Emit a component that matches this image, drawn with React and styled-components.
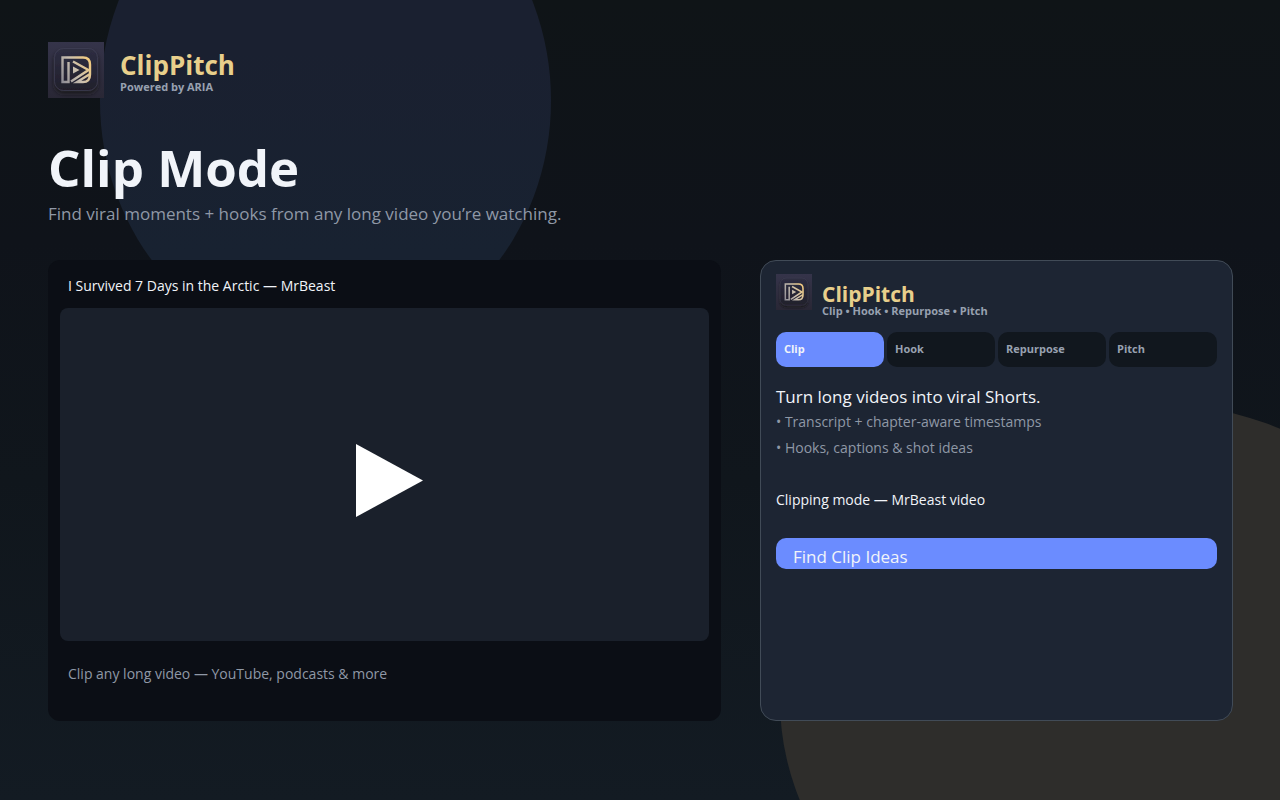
import React from 'react';
import styled, { createGlobalStyle } from 'styled-components';

const GlobalStyle = createGlobalStyle`
  * { box-sizing: border-box; }
  body {
    margin: 0;
    background: #10151b;
    color: #f1f4f9;
    font-family: 'Open Sans', 'Noto Sans', sans-serif;
  }
  h1, h2, p, ul { margin: 0; padding: 0; }
`;

const Page = styled.div`
  position: relative;
  display: flex;
  flex-direction: column;
  min-height: 100vh;
  padding: 42px 47px 79px 48px;
  overflow: hidden;
  background: linear-gradient(#0f1417 0%, #0f131a 30%, #10161c 60%, #131b23 100%);
`;

const Glow = styled.div`
  position: absolute;
  border-radius: 50%;
  background: ${(p) => p.$color};
  left: ${(p) => p.$left};
  top: ${(p) => p.$top};
  width: ${(p) => p.$width};
  height: ${(p) => p.$height};
`;

const Brand = styled.div`
  position: relative;
  display: flex;
  align-items: flex-start;
  gap: ${(p) => (p.$small ? '10px' : '16px')};
`;

const BrandText = styled.div`
  padding-top: 8px;
`;

const BrandName = styled.p`
  color: #e8cf8b;
  font-size: ${(p) => (p.$small ? '21px' : '26px')};
  line-height: ${(p) => (p.$small ? '24px' : '30px')};
  font-weight: 700;
`;

const Tagline = styled.p`
  color: #98a1b0;
  font-size: 11px;
  line-height: ${(p) => (p.$small ? '10px' : '14px')};
  font-weight: 700;
`;

const Intro = styled.header`
  position: relative;
  margin-top: 38px;
`;

const Title = styled.h1`
  font-size: 51px;
  line-height: 62px;
  font-weight: 700;
`;

const Subtitle = styled.p`
  margin-top: 4px;
  color: #8f98a6;
  font-size: 17px;
  line-height: 24px;
`;

const Columns = styled.main`
  position: relative;
  display: grid;
  grid-template-columns: 673fr 473fr;
  gap: 39px;
  flex: 1;
  margin-top: 34px;
`;

const VideoCard = styled.section`
  display: flex;
  flex-direction: column;
  padding: 12px;
  border-radius: 12px;
  background: #0b0e15;
`;

const Caption = styled.p`
  padding: 0 8px;
  color: ${(p) => (p.$muted ? '#8f98a6' : '#f1f4f9')};
  font-size: 14px;
  line-height: 28px;
`;

const Player = styled.button`
  display: flex;
  align-items: center;
  justify-content: center;
  flex: 1;
  margin: 8px 0 19px;
  padding: 12px 0 0 10px;
  border: 0;
  border-radius: 8px;
  background: #1a202b;
`;

const Footer = styled.div`
  padding-bottom: 21px;
`;

const Panel = styled.aside`
  padding: 13px 15px;
  border: 1px solid #414b57;
  border-radius: 16px;
  background: #1d2533;
`;

const Tabs = styled.nav`
  display: grid;
  grid-template-columns: repeat(4, 1fr);
  gap: 3px;
  margin-top: 16px;
`;

const Tab = styled.button`
  height: 35px;
  padding: 0 8px 2px;
  border: 0;
  border-radius: 10px;
  background: ${(p) => (p.$active ? '#6b8cff' : '#11171e')};
  color: ${(p) => (p.$active ? '#f1f4f9' : '#98a1b0')};
  font-family: inherit;
  font-size: 11px;
  font-weight: 700;
  text-align: left;
`;

const PanelTitle = styled.h2`
  margin-top: 18px;
  font-size: 17px;
  line-height: 24px;
  font-weight: 400;
`;

const Features = styled.ul`
  list-style: none;
  color: #8f98a6;
  font-size: 14px;
  line-height: 26px;
`;

const Status = styled.p`
  margin-top: 26px;
  font-size: 14px;
  line-height: 26px;
`;

const Action = styled.button`
  display: block;
  width: 100%;
  height: 31px;
  margin-top: 25px;
  padding: 7px 17px 0;
  border: 0;
  border-radius: 10px;
  background: #6b8cff;
  color: #f1f4f9;
  font-family: inherit;
  font-size: 17px;
  line-height: 24px;
  text-align: left;
`;

function Logo({ size, id }) {
  return (
    <svg width={size} height={size} viewBox="0 0 56 56" aria-hidden="true">
      <defs>
        <linearGradient id={`${id}-back`} x1="0" y1="0" x2="0" y2="1">
          <stop offset="0" stopColor="#35344a" />
          <stop offset="1" stopColor="#292735" />
        </linearGradient>
        <linearGradient id={`${id}-tile`} x1="0" y1="0" x2="0" y2="1">
          <stop offset="0" stopColor="#2e2e42" />
          <stop offset="1" stopColor="#211f2b" />
        </linearGradient>
        <linearGradient id={`${id}-metal`} gradientUnits="userSpaceOnUse" x1="13" y1="38" x2="43" y2="22">
          <stop offset="0" stopColor="#8d8b94" />
          <stop offset="0.5" stopColor="#c9bfb0" />
          <stop offset="1" stopColor="#f1ca80" />
        </linearGradient>
        <filter id={`${id}-shadow`} x="-20%" y="-20%" width="140%" height="150%">
          <feDropShadow dx="0" dy="3" stdDeviation="2" floodColor="#14121d" floodOpacity="0.8" />
        </filter>
      </defs>
      <rect width="56" height="56" fill={`url(#${id}-back)`} />
      <rect x="6.5" y="6.5" width="43" height="42" rx="9" fill={`url(#${id}-tile)`} stroke="#45445a" strokeWidth="0.6" filter={`url(#${id}-shadow)`} />
      <g fill="none" stroke={`url(#${id}-metal)`} strokeWidth="2.4" strokeLinejoin="miter">
        <path d="M20.5 20V40H14.500V15.500H35Q42 15.500 42 22.500V32.500Q42 40 35 40H29L42 32" />
        <path d="M25 19.500L40.500 28L23 39.500" />
      </g>
      <path d="M25 24.500L31.500 28L25 31.500Z" fill={`url(#${id}-metal)`} />
    </svg>
  );
}

const tabs = ['Clip', 'Hook', 'Repurpose', 'Pitch'];
const features = ['Transcript + chapter-aware timestamps', 'Hooks, captions & shot ideas'];

export default function App() {
  return (
    <>
      <GlobalStyle />
      <Page>
        <Glow $color="linear-gradient(#1a2030 40%, #182231 80%)" $left="100px" $top="-150px" $width="451px" $height="501px" />
        <Glow $color="#2e2d2b" $left="780px" $top="400px" $width="701px" $height="601px" />
        <Brand>
          <Logo size={56} id="main" />
          <BrandText>
            <BrandName>ClipPitch</BrandName>
            <Tagline>Powered by ARIA</Tagline>
          </BrandText>
        </Brand>
        <Intro>
          <Title>Clip Mode</Title>
          <Subtitle>Find viral moments + hooks from any long video you’re watching.</Subtitle>
        </Intro>
        <Columns>
          <VideoCard>
            <Caption>I Survived 7 Days in the Arctic — MrBeast</Caption>
            <Player aria-label="Play video">
              <svg width="67" height="73" viewBox="0 0 67 73" aria-hidden="true">
                <path d="M0 0L67 36.5L0 73Z" fill="#fff" />
              </svg>
            </Player>
            <Footer>
              <Caption $muted>Clip any long video — YouTube, podcasts &amp; more</Caption>
            </Footer>
          </VideoCard>
          <Panel>
            <Brand $small>
              <Logo size={36} id="panel" />
              <BrandText>
                <BrandName $small>ClipPitch</BrandName>
                <Tagline $small>Clip • Hook • Repurpose • Pitch</Tagline>
              </BrandText>
            </Brand>
            <Tabs>
              {tabs.map((tab, i) => (
                <Tab key={tab} $active={i === 0}>{tab}</Tab>
              ))}
            </Tabs>
            <PanelTitle>Turn long videos into viral Shorts.</PanelTitle>
            <Features>
              {features.map((f) => (
                <li key={f}>• {f}</li>
              ))}
            </Features>
            <Status>Clipping mode — MrBeast video</Status>
            <Action>Find Clip Ideas</Action>
          </Panel>
        </Columns>
      </Page>
    </>
  );
}
